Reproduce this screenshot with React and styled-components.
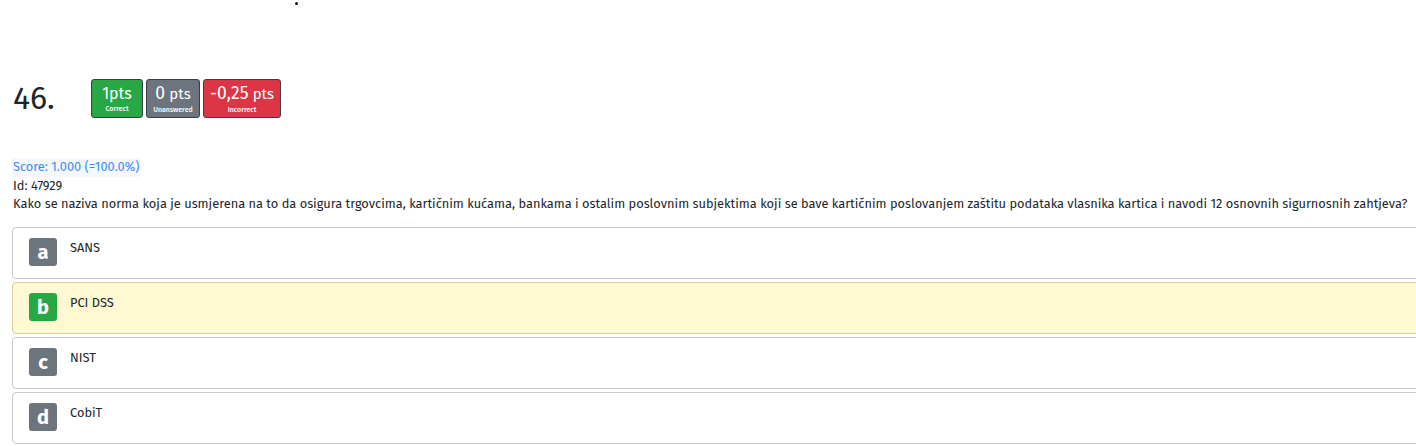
import React from "react";
import styled, { createGlobalStyle } from "styled-components";

const Global = createGlobalStyle`
  html, body { margin: 0; padding: 0; overflow: hidden; background: #fff; }
  body { font-family: "Fira Sans", "Open Sans", "Noto Sans", sans-serif; color: #212529; }
`;

const Page = styled.div`
  padding: 0 0 0 12px;
  width: 1440px;
`;

const DotRow = styled.div`
  height: 6px;
  padding-top: 2px;
  padding-left: 283px;
`;

const Dot = styled.div`
  width: 3px;
  height: 3px;
  border-radius: 50%;
  background: #111;
`;

const Header = styled.div`
  display: flex;
  align-items: center;
  margin-top: 71px;
`;

const Number = styled.div`
  width: 79px;
  font-size: 32px;
  line-height: 39px;
  color: #212529;
  padding-left: 1px;
  box-sizing: border-box;
`;

const Badges = styled.div`
  display: flex;
  gap: 3px;
`;

const Badge = styled.div`
  display: flex;
  flex-direction: column;
  align-items: center;
  justify-content: center;
  height: 39px;
  width: ${(p) => p.$w}px;
  box-sizing: border-box;
  border: 1px solid #3a3f44;
  border-radius: 3px;
  background: ${(p) => p.$bg};
  color: #fff;
`;

const BadgeTop = styled.div`
  font-size: 16px;
  line-height: 19px;
  white-space: nowrap;
`;

const Big = styled.span`
  font-size: 17.5px;
`;

const Small = styled.span`
  font-size: 15px;
`;

const BadgeSub = styled.div`
  font-size: 7px;
  font-weight: 500;
  line-height: 9px;
  margin-top: 1px;
`;

const Score = styled.div`
  margin-top: 40px;
  display: inline-block;
  background: #f4f7fc;
  color: #3d8bfd;
  font-size: 12.8px;
  line-height: 18.5px;
  padding: 0 1px;
`;

const Line = styled.div`
  font-size: 12.8px;
  line-height: 18.5px;
  padding-left: 1px;
`;

const Options = styled.div`
  margin-top: 13px;
  display: flex;
  flex-direction: column;
  gap: 3px;
`;

const Option = styled.div`
  display: flex;
  align-items: flex-start;
  gap: 13px;
  height: 52px;
  box-sizing: border-box;
  padding: 10px 16px;
  border: 1px solid ${(p) => (p.$correct ? "#d6cfa2" : "#c9c9c9")};
  border-radius: 4px;
  background: ${(p) => (p.$correct ? "#fef9d3" : "#fff")};
`;

const Letter = styled.div`
  width: 28px;
  height: 28px;
  flex: none;
  border-radius: 3px;
  background: ${(p) => (p.$correct ? "#28a745" : "#6c757d")};
  color: #fff;
  font-size: 20px;
  font-weight: 700;
  display: flex;
  align-items: center;
  justify-content: center;
  line-height: 1;
`;

const OptText = styled.div`
  font-size: 12.8px;
  line-height: 16px;
  padding-top: 2px;
`;

const opts = [
  { l: "a", t: "SANS" },
  { l: "b", t: "PCI DSS", c: true },
  { l: "c", t: "NIST" },
  { l: "d", t: "CobiT" },
];

export default function App() {
  return (
    <>
      <Global />
      <Page>
        <DotRow>
          <Dot />
        </DotRow>
        <Header>
          <Number>46.</Number>
          <Badges>
            <Badge $bg="#28a745" $w={52}>
              <BadgeTop>1pts</BadgeTop>
              <BadgeSub>Correct</BadgeSub>
            </Badge>
            <Badge $bg="#6c757d" $w={54}>
              <BadgeTop>
                <Big>0</Big> <Small>pts</Small>
              </BadgeTop>
              <BadgeSub>Unanswered</BadgeSub>
            </Badge>
            <Badge $bg="#dc3545" $w={78}>
              <BadgeTop>
                <Big>-0,25</Big> <Small>pts</Small>
              </BadgeTop>
              <BadgeSub>Incorrect</BadgeSub>
            </Badge>
          </Badges>
        </Header>
        <Score>Score: 1.000 (=100.0%)</Score>
        <Line>Id: 47929</Line>
        <Line>
          Kako se naziva norma koja je usmjerena na to da osigura trgovcima, kartičnim kućama, bankama i ostalim poslovnim subjektima koji se bave kartičnim poslovanjem zaštitu podataka vlasnika kartica i navodi 12 osnovnih sigurnosnih zahtjeva?
        </Line>
        <Options>
          {opts.map((o) => (
            <Option key={o.l} $correct={o.c}>
              <Letter $correct={o.c}>{o.l}</Letter>
              <OptText>{o.t}</OptText>
            </Option>
          ))}
        </Options>
      </Page>
    </>
  );
}
